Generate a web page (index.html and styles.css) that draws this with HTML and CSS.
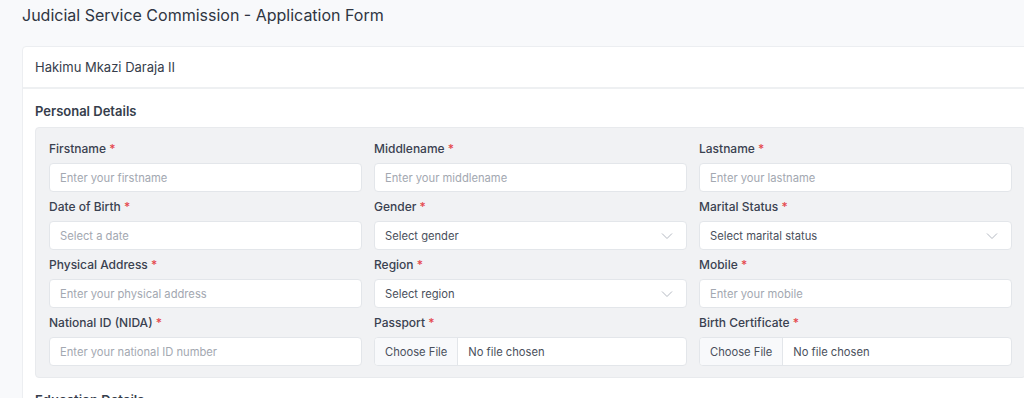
FILE: index.html
```html
<!DOCTYPE html>
<html lang="en">
<head>
  <meta charset="UTF-8" />
  <meta name="viewport" content="width=device-width, initial-scale=1.0" />
  <title>Judicial Service Commission - Application Form</title>
  <link rel="stylesheet" href="styles.css">
</head>
<body>
  <h1 class="page-title">Judicial Service Commission - Application Form</h1>

  <div class="card">
    <div class="card-header">Hakimu Mkazi Daraja II</div>
    <div class="card-body">
      <h2 class="section-title">Personal Details</h2>
      <div class="panel">
        <div class="field">
          <label>Firstname <span class="req">*</span></label>
          <input type="text" placeholder="Enter your firstname">
        </div>
        <div class="field">
          <label>Middlename <span class="req">*</span></label>
          <input type="text" placeholder="Enter your middlename">
        </div>
        <div class="field">
          <label>Lastname <span class="req">*</span></label>
          <input type="text" placeholder="Enter your lastname">
        </div>

        <div class="field">
          <label>Date of Birth <span class="req">*</span></label>
          <input type="text" placeholder="Select a date">
        </div>
        <div class="field">
          <label>Gender <span class="req">*</span></label>
          <div class="select">Select gender <svg width="12" height="8" viewBox="0 0 12 8"><path d="M1 1.5l5 5 5-5" fill="none" stroke="#b4b9c2" stroke-width="1"/></svg></div>
        </div>
        <div class="field">
          <label>Marital Status <span class="req">*</span></label>
          <div class="select">Select marital status <svg width="12" height="8" viewBox="0 0 12 8"><path d="M1 1.5l5 5 5-5" fill="none" stroke="#b4b9c2" stroke-width="1"/></svg></div>
        </div>

        <div class="field">
          <label>Physical Address <span class="req">*</span></label>
          <input type="text" placeholder="Enter your physical address">
        </div>
        <div class="field">
          <label>Region <span class="req">*</span></label>
          <div class="select">Select region <svg width="12" height="8" viewBox="0 0 12 8"><path d="M1 1.5l5 5 5-5" fill="none" stroke="#b4b9c2" stroke-width="1"/></svg></div>
        </div>
        <div class="field">
          <label>Mobile <span class="req">*</span></label>
          <input type="text" placeholder="Enter your mobile">
        </div>

        <div class="field">
          <label>National ID (NIDA) <span class="req">*</span></label>
          <input type="text" placeholder="Enter your national ID number">
        </div>
        <div class="field">
          <label>Passport <span class="req">*</span></label>
          <div class="file"><span class="file-btn">Choose File</span><span class="file-name">No file chosen</span></div>
        </div>
        <div class="field">
          <label>Birth Certificate <span class="req">*</span></label>
          <div class="file"><span class="file-btn">Choose File</span><span class="file-name">No file chosen</span></div>
        </div>
      </div>

      <h2 class="section-title next">Education Details</h2>
    </div>
  </div>
</body>
</html>
```

FILE: styles.css
```css
html {
  overflow: hidden;
}
body {
  margin: 0;
  padding: 0 0 0 22px;
  font-family: Inter, "Noto Sans", Arial, sans-serif;
  background-color: #f8f9fb;
  color: #353c4a;
}
.page-title {
  margin: 0;
  padding-top: 4px;
  height: 42px;
  font-size: 16px;
  font-weight: 400;
  line-height: 22px;
  color: #2f3542;
}
.card {
  width: 1015px;
  background: white;
  border: 1px solid #eceef1;
  border-radius: 4px;
}
.card-header {
  padding: 13px 12px 12px;
  font-size: 13px;
  line-height: 15px;
  border-bottom: 2px solid #eef0f2;
  color: #363d4b;
}
.card-body {
  padding: 12px 12px 0;
}
.section-title {
  margin: 0 0 6px;
  font-size: 13px;
  font-weight: 600;
  line-height: 20px;
  color: #363d4b;
}
.section-title.next {
  margin-top: 12px;
}
.panel {
  display: grid;
  grid-template-columns: repeat(3, 1fr);
  column-gap: 12px;
  row-gap: 7px;
  padding: 13px 13px 11px;
  background: #f1f2f4;
  border: 1px solid #e8eaed;
  border-radius: 4px;
}
.field {
  display: flex;
  flex-direction: column;
}
label {
  font-size: 12px;
  font-weight: 500;
  line-height: 16px;
  margin-bottom: 6px;
  color: #3a4150;
}
.req {
  color: #e5484d;
}
input, .select, .file {
  box-sizing: border-box;
  height: 29px;
  background: white;
  border: 1px solid #e3e6ea;
  border-radius: 4px;
  font-family: inherit;
  font-size: 11.2px;
}
input {
  padding: 0 10px;
  color: #353c4a;
}
input::placeholder {
  color: #a3a8b1;
}
.select {
  display: flex;
  align-items: center;
  justify-content: space-between;
  padding: 0 13px 0 10px;
  color: #4a505c;
}
.file {
  display: flex;
  align-items: stretch;
  overflow: hidden;
  color: #4a505c;
}
.file-btn {
  display: flex;
  align-items: center;
  padding: 0 10px;
  background: #f8f9fb;
  border-right: 1px solid #e3e6ea;
}
.file-name {
  display: flex;
  align-items: center;
  padding: 0 10px;
}
```
